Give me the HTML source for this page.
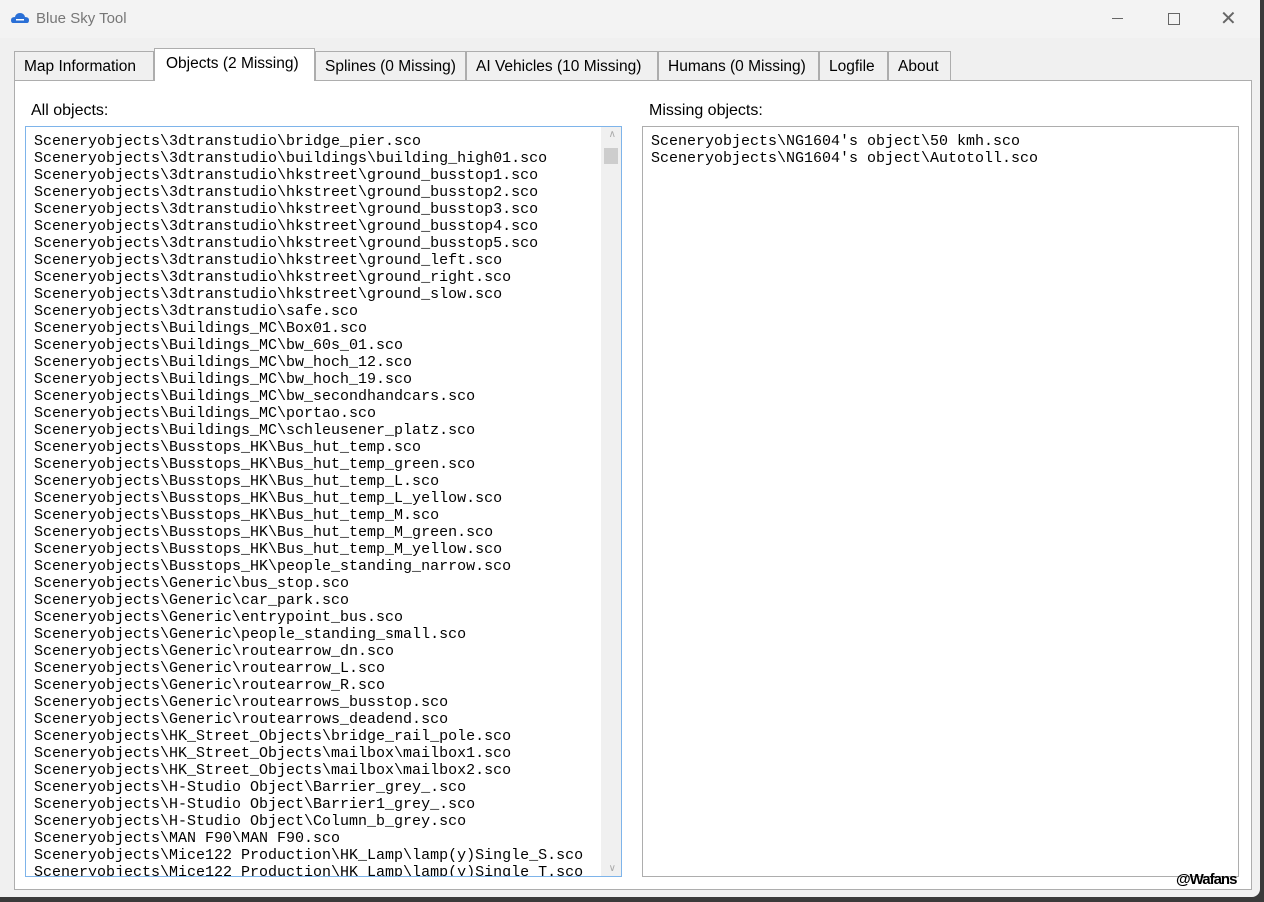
<!DOCTYPE html>
<html><head><style>
body{margin:0;width:1264px;height:902px;background:#3a3a3a;position:relative;overflow:hidden;font-family:"Liberation Sans",sans-serif}
.win{position:absolute;left:0;top:0;width:1260px;height:897px;background:#f0f0f0;border-radius:0 0 8px 0;overflow:hidden}
.title{position:absolute;left:0;top:0;width:1260px;height:38px;background:#f3f3f3;font-size:15px;color:#777}
.title span{position:absolute;left:36px;top:10px}
.tab{position:absolute;top:51px;height:29px;background:#f0f0f0;border:1px solid #adadad;border-bottom:none;font-size:15.5px;color:#000;box-sizing:border-box;padding-left:9px;line-height:29px;white-space:nowrap}
.tab.sel{top:48px;height:33px;background:#fff;z-index:2;line-height:29px}
.panel{position:absolute;left:14px;top:80px;width:1238px;height:810px;background:#fff;border:1px solid #adadad;box-sizing:border-box}
.lbl{position:absolute;font-size:16px;color:#000}
.box{position:absolute;top:126px;height:751px;box-sizing:border-box;background:#fff;overflow:hidden}
.list{position:absolute;left:8px;top:6px;font-family:"Liberation Mono",monospace;font-size:15px;line-height:17px;white-space:pre;color:#000}
</style></head><body>
<div class="win">
<div class="title"><svg style="position:absolute;left:11px;top:13px" width="18" height="11"><path d="M2 10 Q0 10 0 7 Q0 4 4 4 Q5 0 9 0 Q13 0 14 4 Q18 4 18 7 Q18 10 16 10Z" fill="#2a6fd6"/><rect x="5" y="6" width="8" height="1.5" fill="#fff"/></svg><span>Blue Sky Tool</span>
<div style="position:absolute;left:1112px;top:18px;width:11px;height:1px;background:#666"></div>
<div style="position:absolute;left:1168px;top:13px;width:10px;height:10px;border:1px solid #666"></div>
<div style="position:absolute;left:1220px;top:6px;font-size:20px;color:#666">✕</div>
</div>
<div class="tab" style="left:14px;width:140px">Map Information</div>
<div class="tab sel" style="left:154px;width:161px;padding-left:11px">Objects (2 Missing)</div>
<div class="tab" style="left:315px;width:151px">Splines (0 Missing)</div>
<div class="tab" style="left:466px;width:192px">AI Vehicles (10 Missing)</div>
<div class="tab" style="left:658px;width:161px">Humans (0 Missing)</div>
<div class="tab" style="left:819px;width:69px">Logfile</div>
<div class="tab" style="left:888px;width:63px">About</div>
<div class="panel"></div>
<div class="lbl" style="left:31px;top:102px">All objects:</div>
<div class="lbl" style="left:649px;top:102px">Missing objects:</div>
<div class="box" style="left:25px;width:597px;border:1px solid #7eb4ea">
<div class="list">Sceneryobjects\3dtranstudio\bridge_pier.sco
Sceneryobjects\3dtranstudio\buildings\building_high01.sco
Sceneryobjects\3dtranstudio\hkstreet\ground_busstop1.sco
Sceneryobjects\3dtranstudio\hkstreet\ground_busstop2.sco
Sceneryobjects\3dtranstudio\hkstreet\ground_busstop3.sco
Sceneryobjects\3dtranstudio\hkstreet\ground_busstop4.sco
Sceneryobjects\3dtranstudio\hkstreet\ground_busstop5.sco
Sceneryobjects\3dtranstudio\hkstreet\ground_left.sco
Sceneryobjects\3dtranstudio\hkstreet\ground_right.sco
Sceneryobjects\3dtranstudio\hkstreet\ground_slow.sco
Sceneryobjects\3dtranstudio\safe.sco
Sceneryobjects\Buildings_MC\Box01.sco
Sceneryobjects\Buildings_MC\bw_60s_01.sco
Sceneryobjects\Buildings_MC\bw_hoch_12.sco
Sceneryobjects\Buildings_MC\bw_hoch_19.sco
Sceneryobjects\Buildings_MC\bw_secondhandcars.sco
Sceneryobjects\Buildings_MC\portao.sco
Sceneryobjects\Buildings_MC\schleusener_platz.sco
Sceneryobjects\Busstops_HK\Bus_hut_temp.sco
Sceneryobjects\Busstops_HK\Bus_hut_temp_green.sco
Sceneryobjects\Busstops_HK\Bus_hut_temp_L.sco
Sceneryobjects\Busstops_HK\Bus_hut_temp_L_yellow.sco
Sceneryobjects\Busstops_HK\Bus_hut_temp_M.sco
Sceneryobjects\Busstops_HK\Bus_hut_temp_M_green.sco
Sceneryobjects\Busstops_HK\Bus_hut_temp_M_yellow.sco
Sceneryobjects\Busstops_HK\people_standing_narrow.sco
Sceneryobjects\Generic\bus_stop.sco
Sceneryobjects\Generic\car_park.sco
Sceneryobjects\Generic\entrypoint_bus.sco
Sceneryobjects\Generic\people_standing_small.sco
Sceneryobjects\Generic\routearrow_dn.sco
Sceneryobjects\Generic\routearrow_L.sco
Sceneryobjects\Generic\routearrow_R.sco
Sceneryobjects\Generic\routearrows_busstop.sco
Sceneryobjects\Generic\routearrows_deadend.sco
Sceneryobjects\HK_Street_Objects\bridge_rail_pole.sco
Sceneryobjects\HK_Street_Objects\mailbox\mailbox1.sco
Sceneryobjects\HK_Street_Objects\mailbox\mailbox2.sco
Sceneryobjects\H-Studio Object\Barrier_grey_.sco
Sceneryobjects\H-Studio Object\Barrier1_grey_.sco
Sceneryobjects\H-Studio Object\Column_b_grey.sco
Sceneryobjects\MAN F90\MAN F90.sco
Sceneryobjects\Mice122 Production\HK_Lamp\lamp(y)Single_S.sco
Sceneryobjects\Mice122 Production\HK_Lamp\lamp(y)Single_T.sco</div>
<div style="position:absolute;right:0;top:0;width:20px;height:749px;background:#f0f0f0"></div>
<div style="position:absolute;right:3px;top:21px;width:14px;height:16px;background:#cdcdcd"></div>
<div style="position:absolute;right:5px;top:2px;font-size:10px;color:#aaa">∧</div>
<div style="position:absolute;right:5px;bottom:2px;font-size:10px;color:#aaa">∨</div>
</div>
<div class="box" style="left:642px;width:597px;border:1px solid #adadad">
<div class="list">Sceneryobjects\NG1604's object\50 kmh.sco
Sceneryobjects\NG1604's object\Autotoll.sco</div>
</div>
<div style="position:absolute;left:1176px;top:871px;font-size:15px;font-weight:bold;color:#000;letter-spacing:-1px">@Wafans</div>
</div>
</body></html>
